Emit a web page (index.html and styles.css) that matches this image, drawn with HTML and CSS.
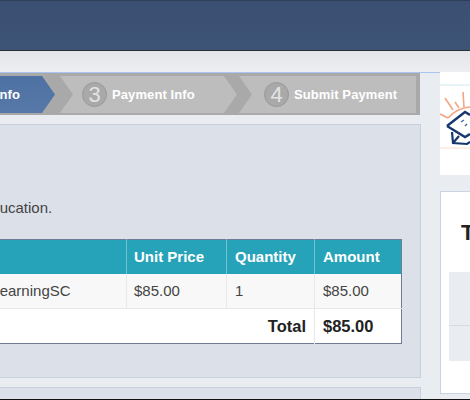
FILE: index.html
```html
<html>
<head>
	<title>Checkout</title>
	<link rel="stylesheet" href="styles.css">
</head>
<body>
<div class="page">
	<div class="top_bar"></div>
	<div class="sub_bar"></div>
	<div class="content">
		<div class="main">
			<div class="steps">
				<div class="step step_active"><span class="step_label">Contact Info</span></div>
				<div class="step"><span class="step_num">3</span><span class="step_label">Payment Info</span></div>
				<div class="step step_last"><span class="step_num">4</span><span class="step_label">Submit Payment</span></div>
			</div>
			<div class="panel">
				<p class="intro">education.</p>
				<table class="order">
					<tr>
						<th class="col_item"></th>
						<th class="col_price">Unit Price</th>
						<th class="col_qty">Quantity</th>
						<th class="col_amount">Amount</th>
					</tr>
					<tr class="item_row">
						<td class="item_name">eLearningSC</td>
						<td class="col_price">$85.00</td>
						<td>1</td>
						<td>$85.00</td>
					</tr>
					<tr class="total_row">
						<td colspan="3" class="total_label">Total</td>
						<td>$85.00</td>
					</tr>
				</table>
			</div>
			<div class="panel_next"></div>
		</div>
		<div class="side">
			<div class="logo_box">
				<svg class="logo" width="30" height="103" viewBox="0 0 30 103">
					<path d="M0 13H30" stroke="#e6f4f8" stroke-width="2"/>
					<path d="M0 76H30" stroke="#fdeee6" stroke-width="2"/>
					<g stroke="#f2a583" stroke-width="1.6" fill="none">
						<path d="M0 42L8 46"/>
						<path d="M5 26L13 38"/>
						<path d="M15 30L19 36"/>
						<path d="M23 20L24 35"/>
						<path d="M8 46Q17 36 30 35"/>
					</g>
					<path d="M7 54L25 40L30 43M7 54L25 65L30 62" stroke="#17376f" stroke-width="2.4" fill="#fff"/>
					<path d="M12 60L13 71L27 72L30 70M13 71L19 64" stroke="#17376f" stroke-width="2.2" fill="none"/>
					<path d="M21 50L24 48M25 54L27 52" stroke="#3f5f93" stroke-width="1.2"/>
				</svg>
			</div>
			<div class="side_card">
				<div class="side_title">Total</div>
				<div class="side_rows">
					<div class="side_row"></div>
					<div class="side_row"></div>
				</div>
			</div>
		</div>
	</div>
</div>
</body>
</html>
```

FILE: styles.css
```css
html, body {
	margin: 0;
	padding: 0;
	font-family: "Liberation Sans", Arial, sans-serif;
	background-color: #E9ECF1;
}
.page {
	box-sizing: border-box;
	width: 470px;
	height: 400px;
	overflow: hidden;
	border-bottom: 1px solid #111;
}
.top_bar {
	box-sizing: border-box;
	height: 51px;
	background: linear-gradient(#3A4F72, #3E5477);
	border-top: 1px solid #2F3F5A;
	border-bottom: 1px solid #2B3038;
}
.sub_bar {
	height: 21px;
	background: linear-gradient(#E3E5E9, #ECEEF2);
}
.content {
	display: flex;
	align-items: flex-start;
}
.main {
	flex: none;
	box-sizing: border-box;
	width: 540px;
	margin-left: -100px;
	padding-right: 19px;
	border-top: 1px solid #A9C4F0;
}
.steps {
	display: flex;
	align-items: stretch;
	height: 37px;
	margin-right: 1px;
	padding: 3px 4px 2px 0;
	background-color: #A9A9A9;
}
.step {
	flex: none;
	display: flex;
	align-items: center;
	box-sizing: border-box;
	width: 177px;
	padding-left: 22px;
	margin-right: 2px;
	background-color: #BDBDBD;
	clip-path: polygon(0 0, 164px 0, 177px 50%, 164px 100%, 0 100%, 13px 50%);
}
.step_active {
	width: 155px;
	margin-right: 5px;
	padding: 0 35px 0 0;
	justify-content: flex-end;
	background: linear-gradient(#4E71A3, #5679A9);
	clip-path: polygon(0 0, 142px 0, 155px 50%, 142px 100%, 0 100%);
}
.step_last {
	padding-left: 25px;
	margin-right: 0;
	clip-path: polygon(0 0, 100% 0, 100% 100%, 0 100%, 13px 50%);
}
.step_num {
	flex: none;
	box-sizing: border-box;
	width: 25px;
	height: 25px;
	margin-right: 5px;
	border: 1px solid #999;
	border-radius: 50%;
	background-color: #A9A9A9;
	color: #E3E3E3;
	font-size: 22px;
	line-height: 24px;
	text-align: center;
}
.step_label {
	color: #FFF;
	font-size: 13px;
	font-weight: bold;
	letter-spacing: 0.1px;
	white-space: nowrap;
}
.panel {
	box-sizing: border-box;
	height: 254px;
	margin-top: 9px;
	padding: 74px 19px 0 14px;
	background-color: #DCE0E9;
	border: 1px solid #C9D0DD;
}
.intro {
	margin: 0 0 22px 68px;
	color: #444;
	font-size: 15px;
	line-height: 18px;
}
.order {
	border-collapse: collapse;
	table-layout: fixed;
	width: 487px;
	font-size: 15px;
	color: #444;
	background-color: #FFF;
	border: 1px solid #6F7C94;
}
.order th,
.order td {
	box-sizing: border-box;
	padding: 0 8px;
}
.order th {
	height: 34px;
	background-color: #26A3B8;
	color: #FFF;
	font-weight: bold;
	text-align: left;
	border-left: 1px solid #6FC3D1;
}
.order th.col_item {
	border-left: none;
}
.col_item {
	width: 211px;
}
.col_price {
	width: 100px;
}
.order th.col_price,
.order td.col_price {
	padding-left: 7px;
}
.col_qty {
	width: 88px;
}
.order td {
	height: 35px;
	border-left: 1px solid #E8E8E8;
	border-bottom: 1px solid #E8E8E8;
}
.item_row td {
	background-color: #F8F8F8;
}
.order td.item_name {
	padding-left: 67px;
	border-left: none;
}
.total_row td {
	color: #222;
	font-size: 16.5px;
	font-weight: bold;
	border-bottom: none;
}
.order td.total_label {
	text-align: right;
	border-left: none;
}
.panel_next {
	height: 11px;
	margin-top: 9px;
	background-color: #DCE0E9;
	border: 1px solid #C9D0DD;
}
.side {
	flex: none;
	width: 30px;
}
.logo_box {
	height: 103px;
	background-color: #FFF;
}
.logo {
	display: block;
}
.side_card {
	box-sizing: border-box;
	height: 203px;
	margin-top: 16px;
	padding: 27px 0 0 8px;
	background-color: #FFF;
	border: 1px solid #C9D3E4;
	border-right: none;
}
.side_title {
	padding-left: 12px;
	color: #222;
	font-size: 22px;
	font-weight: bold;
	line-height: 28px;
	white-space: nowrap;
}
.side_rows {
	margin-top: 25px;
}
.side_row {
	height: 53px;
	background-color: #E9ECF1;
}
.side_row + .side_row {
	height: 35px;
	border-top: 1px solid #D5DAE3;
}
```
